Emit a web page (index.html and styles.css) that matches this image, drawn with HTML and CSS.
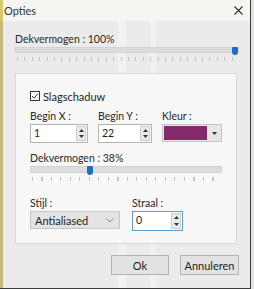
FILE: index.html
```html
<!DOCTYPE html>
<html lang="nl">
<head>
  <meta charset="UTF-8" />
  <title>Opties</title>
  <link rel="stylesheet" href="styles.css">
</head>
<body>
  <div class="window">
    <!-- Title bar -->
    <div class="titlebar">
      <span class="title">Opties</span>
      <svg class="close" width="9" height="9" viewBox="0 0 9 9">
        <path d="M0.5 0.5 L8.5 8.5 M8.5 0.5 L0.5 8.5" stroke="#333" stroke-width="1.1"/>
      </svg>
    </div>

    <div class="content">
      <div class="label">Dekvermogen : 100%</div>
      <div class="slider wide">
        <div class="track"></div>
        <div class="thumb" style="left: 217px"></div>
        <div class="ticks"></div>
      </div>

      <!-- Shadow group -->
      <div class="group">
        <div class="check">
          <svg class="box" width="10" height="10" viewBox="0 0 10 10">
            <rect x="0.5" y="0.5" width="9" height="9" fill="#fff" stroke="#333"/>
            <path d="M2 5 L4 7.2 L8 2.5" fill="none" stroke="#333" stroke-width="1"/>
          </svg>
          <span>Slagschaduw</span>
        </div>

        <div class="row">
          <div class="field">
            <div class="label">Begin X :</div>
            <div class="spin x">
              <span class="value">1</span>
              <span class="arrows">
                <svg width="5" height="3" viewBox="0 0 5 3"><path d="M0 3 L2.5 0 L5 3Z" fill="#333"/></svg>
                <svg width="5" height="3" viewBox="0 0 5 3"><path d="M0 0 L2.5 3 L5 0Z" fill="#333"/></svg>
              </span>
            </div>
          </div>
          <div class="field">
            <div class="label">Begin Y :</div>
            <div class="spin y">
              <span class="value">22</span>
              <span class="arrows">
                <svg width="5" height="3" viewBox="0 0 5 3"><path d="M0 3 L2.5 0 L5 3Z" fill="#333"/></svg>
                <svg width="5" height="3" viewBox="0 0 5 3"><path d="M0 0 L2.5 3 L5 0Z" fill="#333"/></svg>
              </span>
            </div>
          </div>
          <div class="field">
            <div class="label">Kleur :</div>
            <div class="color">
              <span class="swatch"></span>
              <span class="drop">
                <svg width="5" height="3" viewBox="0 0 5 3"><path d="M0 0 L2.5 3 L5 0Z" fill="#333"/></svg>
              </span>
            </div>
          </div>
        </div>

        <div class="label gap">Dekvermogen : 38%</div>
        <div class="slider narrow">
          <div class="track"></div>
          <div class="thumb" style="left: 57px"></div>
          <div class="ticks"></div>
        </div>

        <div class="row bottom">
          <div class="field">
            <div class="label">Stijl :</div>
            <div class="select">
              <span>Antialiased</span>
              <svg width="8" height="5" viewBox="0 0 8 5"><path d="M0.5 0.5 L4 4 L7.5 0.5" fill="none" stroke="#888" stroke-width="1"/></svg>
            </div>
          </div>
          <div class="field">
            <div class="label">Straal :</div>
            <div class="spin r focus">
              <span class="value">0</span>
              <span class="arrows">
                <svg width="5" height="3" viewBox="0 0 5 3"><path d="M0 3 L2.5 0 L5 3Z" fill="#333"/></svg>
                <svg width="5" height="3" viewBox="0 0 5 3"><path d="M0 0 L2.5 3 L5 0Z" fill="#333"/></svg>
              </span>
            </div>
          </div>
        </div>
      </div>

      <div class="buttons">
        <button class="btn ok">Ok</button>
        <button class="btn cancel">Annuleren</button>
      </div>
    </div>
  </div>
</body>
</html>
```

FILE: styles.css
```css
* {
    box-sizing: border-box;
}

body {
    margin: 0;
    font-family: Lato, "Liberation Sans", sans-serif;
    font-size: 10.5px;
    color: #1e1e1e;
    background: #e4e4e4;
}

.window {
    width: 251px;
    height: 289px;
    background: #ebebeb linear-gradient(90deg, transparent 0 118px, #f1f1f1 118px 126px, transparent 126px 150px, #f0f0f0 150px 156px, transparent 156px);
    border-right: 1px solid #3b3b3b;
    border-bottom: 1px solid #3b3b3b;
    box-shadow: inset 3px 0 0 #c6b977;
    overflow: hidden;
}

/* Title bar */
.titlebar {
    height: 21px;
    background: #f5f5f1;
    display: flex;
    align-items: center;
    justify-content: space-between;
    padding: 0 7px 0 4px;
    box-shadow: inset 3px 0 0 #d9c965;
}

.title {
    font-size: 11px;
    color: #333;
}

.content {
    padding: 11px 11px 0 15px;
}

.label {
    height: 14px;
    line-height: 14px;
    color: #2a2a2a;
    white-space: nowrap;
}

/* Sliders */
.slider {
    position: relative;
    height: 16px;
    margin-top: 1px;
}

.slider .track {
    height: 6px;
    margin-top: 1px;
    background: #dcdcdc;
    border: 1px solid #d2d2d2;
}

.slider .thumb {
    position: absolute;
    top: 0;
    width: 6px;
    height: 8px;
    background: #1c6fc4;
    border-radius: 1px 1px 3px 3px;
}

.slider .ticks {
    height: 4px;
    margin: 4px 2px 0;
    background: repeating-linear-gradient(90deg, #c2c2c2 0 1px, transparent 1px 7.4px);
}

.slider.wide {
    width: 224px;
}

.slider.narrow {
    width: 192px;
    margin-top: 1px;
}

.slider.narrow .track {
    height: 7px;
}

.slider.narrow .thumb {
    height: 9px;
}

.slider.narrow .ticks {
    background: repeating-linear-gradient(90deg, #c2c2c2 0 1px, transparent 1px 9.5px);
}

/* Group box */
.group {
    margin-top: 10px;
    width: 222px;
    height: 171px;
    background: #f7f7f7;
    border: 1px solid #d8d8d8;
    padding: 17px 0 0 14px;
}

.check {
    display: flex;
    align-items: center;
    gap: 3px;
    height: 10px;
    font-size: 11px;
}

.row {
    display: flex;
    gap: 10px;
    margin-top: 8px;
}

.row.bottom {
    gap: 12px;
    margin-top: 14px;
}

.field .label {
    margin-bottom: 1px;
}

.label.gap {
    margin-top: 8px;
}

/* Spin boxes */
.spin {
    display: flex;
    height: 19px;
    background: #fff;
    border: 1px solid #b4b4b4;
}

.spin.x { width: 58px; }
.spin.y { width: 54px; }
.spin.r { width: 51px; height: 20px; }

.spin.focus {
    border-color: #5a9bd8;
}

.spin .value {
    flex: 1;
    padding-left: 3px;
    line-height: 17px;
}

.spin .arrows {
    width: 10px;
    margin: 1px 1px 1px 0;
    display: flex;
    flex-direction: column;
    align-items: center;
    justify-content: space-around;
    background: #eaeaea;
    border: 1px solid #cfcfcf;
}

/* Colour picker */
.color {
    display: flex;
    width: 60px;
    height: 18px;
    border: 1px solid #c4c4c4;
    background: #e6e6e6;
}

.color .swatch {
    width: 43px;
    margin: 1px;
    background: #862a6e;
}

.color .drop {
    flex: 1;
    display: flex;
    align-items: center;
    justify-content: center;
}

/* Dropdown */
.select {
    display: flex;
    align-items: center;
    justify-content: space-between;
    width: 90px;
    height: 18px;
    padding: 0 5px 0 4px;
    background: #e3e3e3;
    border: 1px solid #c6c6c6;
    font-size: 11px;
}

/* Dialog buttons */
.buttons {
    display: flex;
    justify-content: flex-end;
    gap: 11px;
    margin-top: 11px;
}

.btn {
    height: 20px;
    border: 1px solid #b3b3b3;
    background: #e2e2e2;
    font-family: inherit;
    font-size: 11px;
    color: #222;
    padding: 0;
}

.btn.ok {
    width: 58px;
}

.btn.cancel {
    width: 59px;
}
```
